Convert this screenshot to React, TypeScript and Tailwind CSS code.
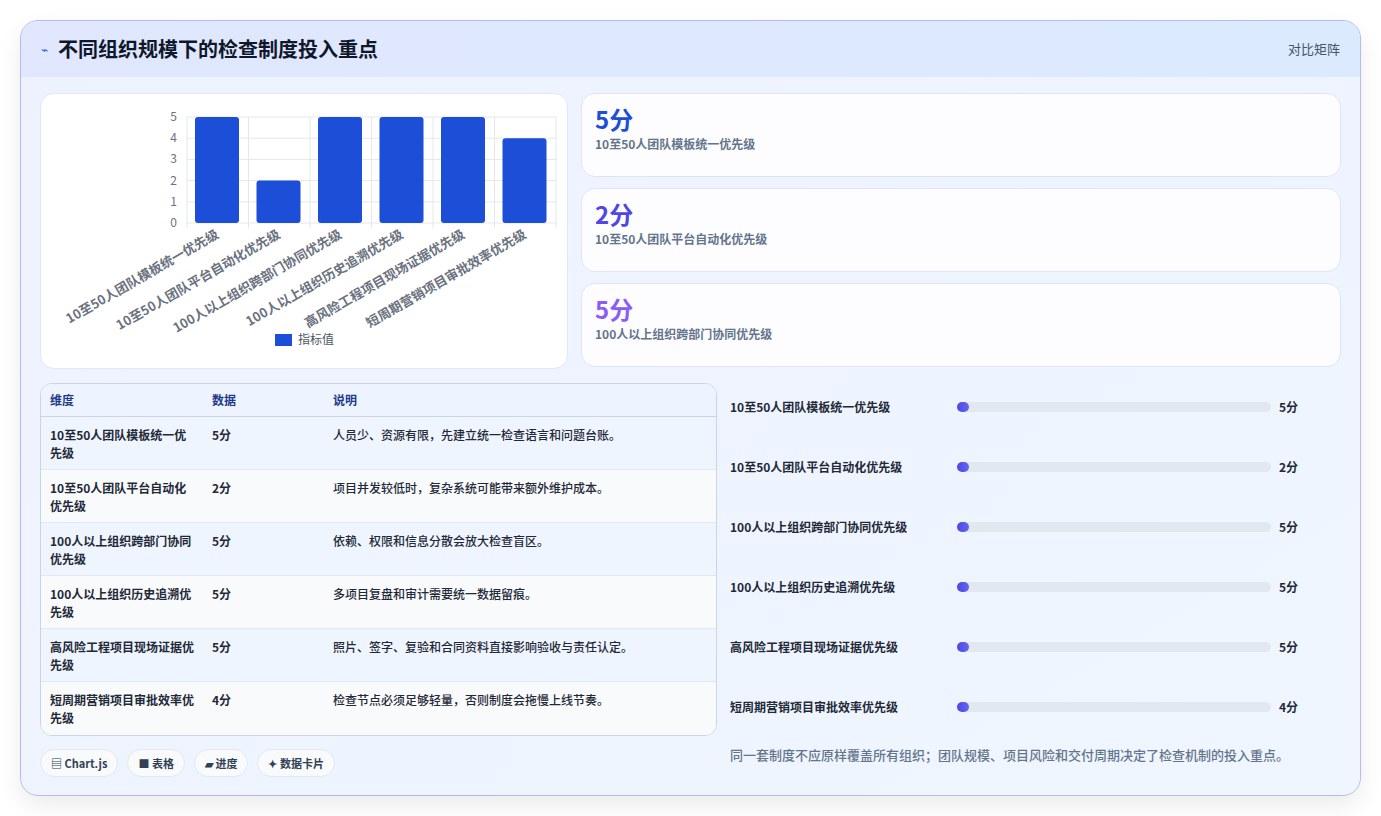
import React from "react";

const rows = [
  { name: "10至50人团队模板统一优先级", v: 5, note: "人员少、资源有限，先建立统一检查语言和问题台账。" },
  { name: "10至50人团队平台自动化优先级", v: 2, note: "项目并发较低时，复杂系统可能带来额外维护成本。" },
  { name: "100人以上组织跨部门协同优先级", v: 5, note: "依赖、权限和信息分散会放大检查盲区。" },
  { name: "100人以上组织历史追溯优先级", v: 5, note: "多项目复盘和审计需要统一数据留痕。" },
  { name: "高风险工程项目现场证据优先级", v: 5, note: "照片、签字、复验和合同资料直接影响验收与责任认定。" },
  { name: "短周期营销项目审批效率优先级", v: 4, note: "检查节点必须足够轻量，否则制度会拖慢上线节奏。" },
];

const font = { fontFamily: '"Noto Sans CJK SC", "Noto Sans", sans-serif' };

const Chart = () => {
  const x0 = 146, x1 = 515, yTop = 23, yBot = 129;
  const step = (x1 - x0) / 6;
  const h = (yBot - yTop) / 5;
  return (
    <svg width="527" height="275" className="block">
      {[0, 1, 2, 3, 4, 5].map((i) => (
        <g key={i}>
          <line x1={x0} x2={x1} y1={yBot - i * h} y2={yBot - i * h} stroke="#e5e7eb" />
          <text x={x0 - 10} y={yBot - i * h + 4} textAnchor="end" fontSize="12" fill="#6b7280">{i}</text>
        </g>
      ))}
      {[0, 1, 2, 3, 4, 5, 6].map((i) => (
        <line key={i} x1={x0 + i * step} x2={x0 + i * step} y1={yTop} y2={yBot + 5} stroke="#e5e7eb" />
      ))}
      {rows.map((r, i) => (
        <g key={r.name}>
          <rect x={x0 + i * step + 8} y={yBot - r.v * h} width={44} height={r.v * h} rx="3" fill="#1d4ed8" />
          <text
            transform={`translate(${x0 + i * step + step / 2 + 2},${yBot + 14}) rotate(-30)`}
            textAnchor="end"
            fontSize="13"
            fontWeight="700"
            fill="#6b7280"
          >
            {r.name}
          </text>
        </g>
      ))}
      <rect x="234" y="240" width="17" height="12" fill="#1d4ed8" />
      <text x="257" y="250" fontSize="12" fill="#4b5563">指标值</text>
    </svg>
  );
};

export default function App() {
  const cardColors = ["text-[#1d4ed8]", "text-[#4f46e5]", "text-[#8b5cf6]"];
  return (
    <div className="w-[1381px] h-[816px] bg-white pt-[20px] pl-[20px]" style={font}>
      <div className="w-[1341px] h-[776px] rounded-[18px] border border-[#b4bde9] bg-gradient-to-br from-[#eef2ff] to-[#eff6ff] overflow-hidden shadow-[0_10px_25px_rgba(0,0,0,0.08)]">
        <div className="h-[56px] bg-gradient-to-r from-[#e0e7ff] to-[#dbeafe] flex items-center justify-between px-[20px]">
          <div className="flex items-center gap-[10px]">
            <span className="text-[#2563eb] text-[12px]">⌁</span>
            <span className="text-[20px] font-bold text-[#0f172a]">不同组织规模下的检查制度投入重点</span>
          </div>
          <span className="text-[13px] text-[#475569]">对比矩阵</span>
        </div>
        <div className="px-[19px] pt-[16px]">
          <div className="flex gap-[13px]">
            <div className="w-[528px] h-[276px] bg-white rounded-[14px] border border-[#e0e7ff]">
              <Chart />
            </div>
            <div className="flex-1 flex flex-col gap-[11px]">
              {rows.slice(0, 3).map((r, i) => (
                <div key={r.name} className="h-[84px] bg-[#fdfdff] rounded-[14px] border border-[#dde5f7] px-[13px] pt-[9px]">
                  <div className={`text-[24px] font-bold leading-[32px] ${cardColors[i]}`}>{r.v}分</div>
                  <div className="text-[12px] font-bold text-[#64748b]">{r.name}</div>
                </div>
              ))}
            </div>
          </div>
          <div className="flex gap-[13px] mt-[14px]">
            <div className="w-[677px]">
              <div className="rounded-[12px] border border-[#cbd5e1] overflow-hidden bg-white">
                <div className="h-[33px] flex items-center bg-[#eef4ff] border-b border-[#cbd5e1] text-[12px] font-bold text-[#1e3a8a]">
                  <div className="w-[171px] pl-[9px]">维度</div>
                  <div className="w-[121px]">数据</div>
                  <div>说明</div>
                </div>
                {rows.map((r, i) => (
                  <div key={r.name} className={`h-[53px] flex pt-[9px] text-[12px] leading-[18px] font-bold text-[#1f2937] border-b border-[#e2e8f0] last:border-b-0 ${i % 2 === 0 ? "bg-[#eff5ff]" : "bg-[#f8fafc]"}`}>
                    <div className="w-[171px] pl-[9px] pr-[16px]">{r.name}</div>
                    <div className="w-[121px]">{r.v}分</div>
                    <div className="font-medium">{r.note}</div>
                  </div>
                ))}
              </div>
              <div className="flex gap-[9px] mt-[13px]">
                {["▤ Chart.js", "■ 表格", "▰ 进度", "✦ 数据卡片"].map((t) => (
                  <span key={t} className="h-[28px] px-[10px] rounded-full bg-[#f8fafc] border border-[#e2e8f0] flex items-center text-[11px] font-bold text-[#334155]">{t}</span>
                ))}
              </div>
            </div>
            <div className="flex-1">
              <div className="flex flex-col pt-[14px]">
                {rows.map((r) => (
                  <div key={r.name} className="h-[60px] flex items-start">
                    <div className="w-[227px] text-[12px] font-bold text-[#1f2937] leading-[20px]">{r.name}</div>
                    <div className="w-[314px] h-[10px] mt-[5px] rounded-full bg-[#e2e8f0]">
                      <div className="h-[10px] w-[12px] rounded-full bg-gradient-to-r from-[#4f46e5] to-[#6366f1]" />
                    </div>
                    <div className="ml-[8px] text-[12px] font-bold text-[#1f2937] leading-[20px]">{r.v}分</div>
                  </div>
                ))}
              </div>
              <div className="text-[13px] text-[#64748b] font-medium -mt-[12px]">同一套制度不应原样覆盖所有组织；团队规模、项目风险和交付周期决定了检查机制的投入重点。</div>
            </div>
          </div>
        </div>
      </div>
    </div>
  );
}
